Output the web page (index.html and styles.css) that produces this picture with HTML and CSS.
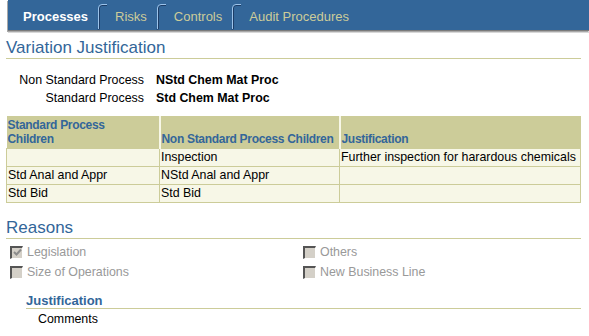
FILE: index.html
```html
<!DOCTYPE html>
<html lang="en">
<head>
    <meta charset="UTF-8">
    <title>Variation Justification</title>
    <link rel="stylesheet" href="styles.css">
</head>
<body>
    <div class="tabbar">
        <span class="tab active">Processes</span>
        <span class="sep"><svg width="12" height="26" viewBox="0 0 12 26"><path d="M1.5 25 L3.5 25 L3.5 4 Q3.5 1.5 6 1.5 L11 1.5" fill="none" stroke="#1c3c66" stroke-width="1"/><path d="M2.5 25 L2.5 4 Q2.5 0.5 6 0.5 L11 0.5" fill="none" stroke="#9cc3ea" stroke-width="1"/></svg></span>
        <span class="tab">Risks</span>
        <span class="sep"><svg width="12" height="26" viewBox="0 0 12 26"><path d="M1.5 25 L3.5 25 L3.5 4 Q3.5 1.5 6 1.5 L11 1.5" fill="none" stroke="#1c3c66" stroke-width="1"/><path d="M2.5 25 L2.5 4 Q2.5 0.5 6 0.5 L11 0.5" fill="none" stroke="#9cc3ea" stroke-width="1"/></svg></span>
        <span class="tab">Controls</span>
        <span class="sep"><svg width="12" height="26" viewBox="0 0 12 26"><path d="M1.5 25 L3.5 25 L3.5 4 Q3.5 1.5 6 1.5 L11 1.5" fill="none" stroke="#1c3c66" stroke-width="1"/><path d="M2.5 25 L2.5 4 Q2.5 0.5 6 0.5 L11 0.5" fill="none" stroke="#9cc3ea" stroke-width="1"/></svg></span>
        <span class="tab">Audit Procedures</span>
    </div>

    <div class="page">
        <h1 class="section-title">Variation Justification</h1>

        <div class="props">
            <span class="prop-label">Non Standard Process</span>
            <span class="prop-value">NStd Chem Mat Proc</span>
            <span class="prop-label">Standard Process</span>
            <span class="prop-value">Std Chem Mat Proc</span>
        </div>

        <table class="grid">
            <tr>
                <th class="c1">Standard Process<br>Children</th>
                <th class="c2">Non Standard Process Children</th>
                <th class="c3">Justification</th>
            </tr>
            <tr>
                <td></td>
                <td>Inspection</td>
                <td>Further inspection for harardous chemicals</td>
            </tr>
            <tr>
                <td>Std Anal and Appr</td>
                <td>NStd Anal and Appr</td>
                <td></td>
            </tr>
            <tr>
                <td>Std Bid</td>
                <td>Std Bid</td>
                <td></td>
            </tr>
        </table>

        <h1 class="section-title reasons">Reasons</h1>

        <div class="checks">
            <label class="check"><span class="box"><svg width="9" height="9" viewBox="0 0 9 9"><path d="M1 4 L3.5 6.5 L8 1.5" fill="none" stroke="#8c8c8c" stroke-width="2"/></svg></span>Legislation</label>
            <label class="check"><span class="box"></span>Others</label>
            <label class="check"><span class="box"></span>Size of Operations</label>
            <label class="check"><span class="box"></span>New Business Line</label>
        </div>

        <div class="sub">
            <h2 class="sub-title">Justification</h2>
            <div class="comments">Comments</div>
        </div>
    </div>
</body>
</html>
```

FILE: styles.css
```css
body {
    margin: 0;
    font-family: "Liberation Sans", Arial, sans-serif;
    font-size: 12.4px;
    color: #000000;
    background: #ffffff;
}
.tabbar {
    margin-left: 8px;
    height: 30px;
    background: #336699;
    display: flex;
    align-items: center;
    padding-left: 15px;
    border-bottom: 1px solid #7a7a7a;
    box-shadow: -1px 1px 0 #a8a8a8, 0 2px 0 #d8d8d8;
}
.tab {
    font-size: 13px;
    color: #cccc99;
    padding-top: 2px;
}
.tab.active {
    color: #ffffff;
    font-weight: bold;
}
.sep {
    display: flex;
    margin: 3px 7px 0 8px;
}
.page {
    padding: 0 8px 0 6px;
}
.section-title {
    margin: 6px 0 0;
    font-size: 17px;
    font-weight: normal;
    color: #336699;
    line-height: 21px;
    border-bottom: 1px solid #cccc99;
}
.props {
    display: grid;
    grid-template-columns: 138px auto;
    column-gap: 12px;
    row-gap: 4px;
    margin: 14px 0 11px 0;
    line-height: 14px;
}
.prop-label {
    text-align: right;
}
.prop-value {
    font-weight: bold;
}
.grid {
    border-collapse: collapse;
    table-layout: fixed;
    width: 575px;
}
.grid th {
    background: #cccc99;
    color: #336699;
    font-size: 12px;
    font-weight: bold;
    letter-spacing: -0.3px;
    text-align: left;
    vertical-align: bottom;
    padding: 1px 1px 2px 1px;
    height: 29px;
    line-height: 14px;
    border-left: 2px solid #f7f7e7;
}
.grid th.c1 {
    border-left: none;
    width: 150px;
}
.grid th.c2 {
    width: 176px;
    white-space: nowrap;
}
.grid td {
    background: #f7f7e7;
    border: 1px solid #cccc99;
    padding: 1px 1px 2px;
    height: 14px;
    line-height: 14px;
    white-space: nowrap;
}
.reasons {
    margin-top: 14px;
}
.checks {
    display: grid;
    grid-template-columns: 293px auto;
    row-gap: 6px;
    margin: 6px 0 0 4px;
}
.check {
    display: flex;
    align-items: center;
    color: #999999;
    line-height: 14px;
}
.box {
    width: 10px;
    height: 10px;
    background: #d4d0c8;
    border-top: 2px solid #555555;
    border-left: 2px solid #555555;
    border-right: 1px solid #ffffff;
    border-bottom: 1px solid #ffffff;
    margin-right: 4px;
    display: flex;
    align-items: center;
    justify-content: center;
}
.sub {
    margin: 14px 0 0 20px;
}
.sub-title {
    margin: 0;
    font-size: 13px;
    color: #336699;
    font-weight: bold;
    line-height: 15px;
    border-bottom: 1px solid #cccc99;
}
.comments {
    padding: 3px 0 0 12px;
}
```
